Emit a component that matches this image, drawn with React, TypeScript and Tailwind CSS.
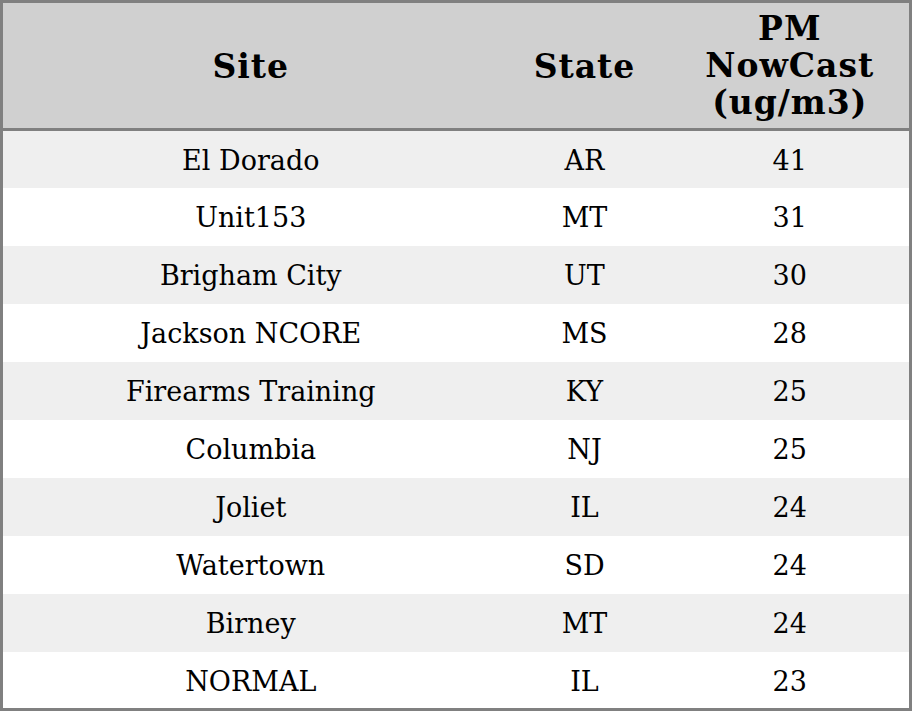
import React from "react";

const rows = [
  ["El Dorado", "AR", "41"],
  ["Unit153", "MT", "31"],
  ["Brigham City", "UT", "30"],
  ["Jackson NCORE", "MS", "28"],
  ["Firearms Training", "KY", "25"],
  ["Columbia", "NJ", "25"],
  ["Joliet", "IL", "24"],
  ["Watertown", "SD", "24"],
  ["Birney", "MT", "24"],
  ["NORMAL", "IL", "23"],
];

export default function App() {
  return (
    <div className="w-[912px] h-[711px] bg-white font-['DejaVu_Serif',serif] text-black">
      <table className="w-full h-full border-[3px] border-[#808080] border-collapse table-fixed">
        <colgroup>
          <col className="w-[497px]" />
          <col className="w-[172px]" />
          <col />
        </colgroup>
        <thead>
          <tr className="bg-[#d0d0d0] h-[128px] border-b-[3px] border-[#808080]">
            <th className="text-[33px] leading-[37px] tracking-[1px] font-bold text-center pt-[2px]">Site</th>
            <th className="text-[33px] leading-[37px] tracking-[1px] font-bold text-center pt-[2px]">State</th>
            <th className="text-[33px] leading-[37px] tracking-[1px] font-bold text-center">
              PM
              <br />
              NowCast
              <br />
              (ug/m3)
            </th>
          </tr>
        </thead>
        <tbody>
          {rows.map((r, i) => (
            <tr key={i} className={i % 2 === 0 ? "bg-[#efefef]" : "bg-white"}>
              {r.map((c, j) => (
                <td key={j} className="text-[27px] text-center h-[57px] pt-[4px]">
                  {c}
                </td>
              ))}
            </tr>
          ))}
        </tbody>
      </table>
    </div>
  );
}
